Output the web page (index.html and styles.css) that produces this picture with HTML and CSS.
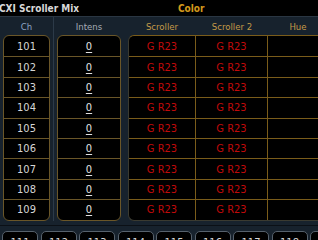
FILE: index.html
```html
<!DOCTYPE html>
<html>
<head>
<meta charset="utf-8">
<link rel="stylesheet" href="styles.css">
</head>
<body>
<div class="title">
  <span class="t-name">CXI Scroller Mix</span>
  <span class="t-sec">Color</span>
</div>
<div class="main">
  <div class="pane pane-ch">
    <div class="hdr hdr-blue">Ch</div>
    <div class="box box-ch">
      <div class="cell">101</div>
      <div class="cell">102</div>
      <div class="cell">103</div>
      <div class="cell">104</div>
      <div class="cell">105</div>
      <div class="cell">106</div>
      <div class="cell">107</div>
      <div class="cell">108</div>
      <div class="cell">109</div>
    </div>
  </div>
  <div class="pane pane-int">
    <div class="hdr hdr-gray">Intens</div>
    <div class="box box-int">
      <div class="cell"><span class="lvl">0</span></div>
      <div class="cell"><span class="lvl">0</span></div>
      <div class="cell"><span class="lvl">0</span></div>
      <div class="cell"><span class="lvl">0</span></div>
      <div class="cell"><span class="lvl">0</span></div>
      <div class="cell"><span class="lvl">0</span></div>
      <div class="cell"><span class="lvl">0</span></div>
      <div class="cell"><span class="lvl">0</span></div>
      <div class="cell"><span class="lvl">0</span></div>
    </div>
  </div>
  <div class="pane pane-color">
    <div class="hdr-row">
      <div class="hdr hdr-amber">Scroller</div>
      <div class="hdr hdr-amber">Scroller 2</div>
      <div class="hdr hdr-amber">Hue</div>
    </div>
    <div class="box box-color">
      <div class="crow"><div class="c red">G R23</div><div class="c red">G R23</div><div class="c"></div></div>
      <div class="crow"><div class="c red">G R23</div><div class="c red">G R23</div><div class="c"></div></div>
      <div class="crow"><div class="c red">G R23</div><div class="c red">G R23</div><div class="c"></div></div>
      <div class="crow"><div class="c red">G R23</div><div class="c red">G R23</div><div class="c"></div></div>
      <div class="crow"><div class="c red">G R23</div><div class="c red">G R23</div><div class="c"></div></div>
      <div class="crow"><div class="c red">G R23</div><div class="c red">G R23</div><div class="c"></div></div>
      <div class="crow"><div class="c red">G R23</div><div class="c red">G R23</div><div class="c"></div></div>
      <div class="crow"><div class="c red">G R23</div><div class="c red">G R23</div><div class="c"></div></div>
      <div class="crow"><div class="c red">G R23</div><div class="c red">G R23</div><div class="c"></div></div>
    </div>
  </div>
</div>
<div class="tabs">
  <div class="tab">111</div>
  <div class="tab">112</div>
  <div class="tab">113</div>
  <div class="tab">114</div>
  <div class="tab">115</div>
  <div class="tab">116</div>
  <div class="tab">117</div>
  <div class="tab">118</div>
  <div class="tab">119</div>
</div>
</body>
</html>
```

FILE: styles.css
```css
* { box-sizing: border-box; }
html, body {
  margin: 0;
  padding: 0;
  width: 318px;
  height: 240px;
  overflow: hidden;
  background: #17222d;
  font-family: "DejaVu Sans", "Liberation Sans", sans-serif;
}
.title {
  height: 17px;
  background: #000;
  border-bottom: 1px solid #2a3642;
  display: flex;
  align-items: center;
  font-size: 10px;
  font-weight: bold;
  font-family: "DejaVu Sans Condensed", "DejaVu Sans", sans-serif;
}
.t-name {
  color: #d8d8d8;
  margin-left: -1px;
  width: 179px;
  flex: none;
}
.t-sec {
  color: #d49a1c;
}
.main {
  display: flex;
  height: 204px;
}
.pane {
  display: flex;
  flex-direction: column;
  flex: none;
}
.pane-ch {
  width: 54px;
  padding-left: 3px;
  border-right: 1px solid #2c3a48;
}
.pane-int {
  width: 74px;
  padding-left: 3px;
}
.pane-color {
  flex: 1 1 auto;
  min-width: 0;
  overflow: hidden;
}
.hdr {
  height: 18px;
  display: flex;
  align-items: center;
  justify-content: center;
  font-size: 9.5px;
  font-family: "DejaVu Sans Condensed", "DejaVu Sans", sans-serif;
}
.hdr-blue { color: #8ea6c4; width: 47px; }
.hdr-gray { color: #a6adb6; width: 64px; }
.hdr-amber { color: #c49a48; }
.hdr-row {
  display: grid;
  grid-template-columns: 68px 72px 60px;
}
.box {
  border: 1px solid #6a5628;
  background: #000;
}
.box-ch {
  width: 47px;
  border-radius: 6px;
}
.box-int {
  width: 64px;
  border-radius: 6px;
}
.cell {
  height: 20.4px;
  display: flex;
  align-items: center;
  justify-content: center;
  color: #d6d6d6;
  font-size: 11px;
  font-family: "DejaVu Sans Condensed", "DejaVu Sans", sans-serif;
}
.cell + .cell {
  border-top: 1px solid #6a5628;
}
.lvl {
  text-decoration: underline;
  text-underline-offset: 2px;
  color: #e0e0e0;
}
.box-color {
  border: 1px solid #3a3a30;
  border-top-color: #7a5c1a;
  border-right: none;
  border-radius: 6px 0 0 6px;
  width: 200px;
}
.crow {
  display: grid;
  grid-template-columns: 67px 72px 60px;
  height: 20.4px;
}
.crow + .crow {
  border-top: 1px solid #7a5c1a;
}
.c {
  display: flex;
  align-items: center;
  justify-content: center;
  font-size: 11px;
  font-family: "DejaVu Sans Condensed", "DejaVu Sans", sans-serif;
  border-right: 1px solid #7a5c1a;
}
.c:last-child { border-right: none; }
.red { color: #c00a0a; }
.tabs {
  border-top: 1px solid #0b1016;
  margin-top: 4px;
  padding: 5px 0 0 2px;
  display: flex;
  gap: 2.5px;
  overflow: hidden;
}
.tab {
  flex: none;
  width: 36px;
  height: 20px;
  border: 1px solid #56616c;
  border-radius: 5px;
  background: #000;
  color: #d8d8d8;
  font-size: 11px;
  text-align: center;
  padding-top: 4px;
  font-family: "DejaVu Sans Condensed", "DejaVu Sans", sans-serif;
}
```
